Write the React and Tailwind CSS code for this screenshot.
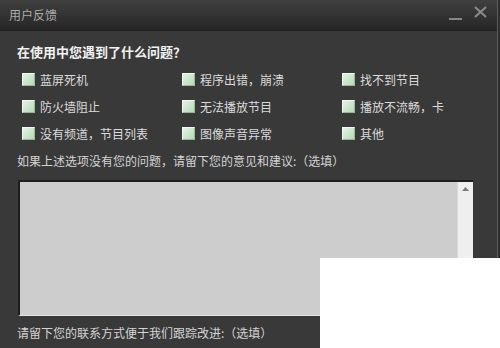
const OPTIONS = [
  "蓝屏死机",
  "程序出错，崩溃",
  "找不到节目",
  "防火墙阻止",
  "无法播放节目",
  "播放不流畅，卡",
  "没有频道，节目列表",
  "图像声音异常",
  "其他",
];

function Check({ label }) {
  return (
    <label className="flex items-center h-[27px] gap-[5px] text-[12px] text-[#dcdcdc]">
      <span className="w-[13px] h-[13px] shrink-0 border border-t-[#f4f8f4] border-l-[#f4f8f4] border-r-[#9ab89a] border-b-[#9ab89a] bg-gradient-to-br from-[#e4f2e4] to-[#b6d9b6]" />
      <span>{label}</span>
    </label>
  );
}

export default function App() {
  return (
    <div
      className="relative w-[500px] h-[348px] overflow-hidden bg-[#2e2e2e]"
      style={{ fontFamily: '"Noto Sans CJK SC", "Liberation Sans", sans-serif' }}
    >
      <div className="w-[498px] h-full bg-[#393939] border-r border-[#5c5c5c]">
        {/* title bar */}
        <div className="h-[31px] flex items-center justify-between pl-[9px] pr-[10px] bg-gradient-to-b from-[#404040] via-[#333333] to-[#262626] border-b border-[#1f1f1f]">
          <span className="text-[12px] leading-none text-[#ababab] mt-[-1px]">用户反馈</span>
          <div className="flex items-center gap-[12px]">
            <svg width="13" height="14" viewBox="0 0 13 14">
              <rect x="0" y="10" width="13" height="2" fill="#858585" />
            </svg>
            <svg width="13" height="12" viewBox="0 0 13 12" className="mt-[-6px]">
              <path d="M1 1 L12 11 M12 1 L1 11" stroke="#8c8c8c" strokeWidth="2" />
            </svg>
          </div>
        </div>

        {/* body */}
        <div className="pl-[17px] pt-[13px]">
          <h2 className="text-[13px] leading-[16px] font-bold text-[#f2f2f2]">在使用中您遇到了什么问题？</h2>
          <div className="mt-[6px] ml-[5px] grid grid-cols-[160px_160px_140px]">
            {OPTIONS.map((o) => (
              <Check key={o} label={o} />
            ))}
          </div>
          <p className="mt-[6px] text-[12px] leading-[16px] text-[#d4d4d4]">
            如果上述选项没有您的问题，请留下您的意见和建议:（选填）
          </p>
          <div className="mt-[11px] ml-[1px] w-[455px] h-[136px] flex bg-[#cdcdcd] border-t-2 border-l-2 border-t-[#1e1e1e] border-l-[#1e1e1e] border-b border-b-[#e6e6e6]">
            <div className="flex-1" />
            <div className="w-[16px] h-full bg-[#efefef] border-l border-[#dadada] flex justify-center pt-[5px]">
              <svg width="7" height="4" viewBox="0 0 7 4">
                <path d="M0 4 L3.5 0 L7 4 Z" fill="#7a7a7a" />
              </svg>
            </div>
          </div>
          <p className="mt-[9px] text-[12px] leading-[16px] text-[#d4d4d4]">
            请留下您的联系方式便于我们跟踪改进:（选填）
          </p>
        </div>
      </div>

      {/* white overlay block */}
      <div className="absolute left-[320px] top-[258px] w-[180px] h-[90px] bg-white" />
    </div>
  );
}
